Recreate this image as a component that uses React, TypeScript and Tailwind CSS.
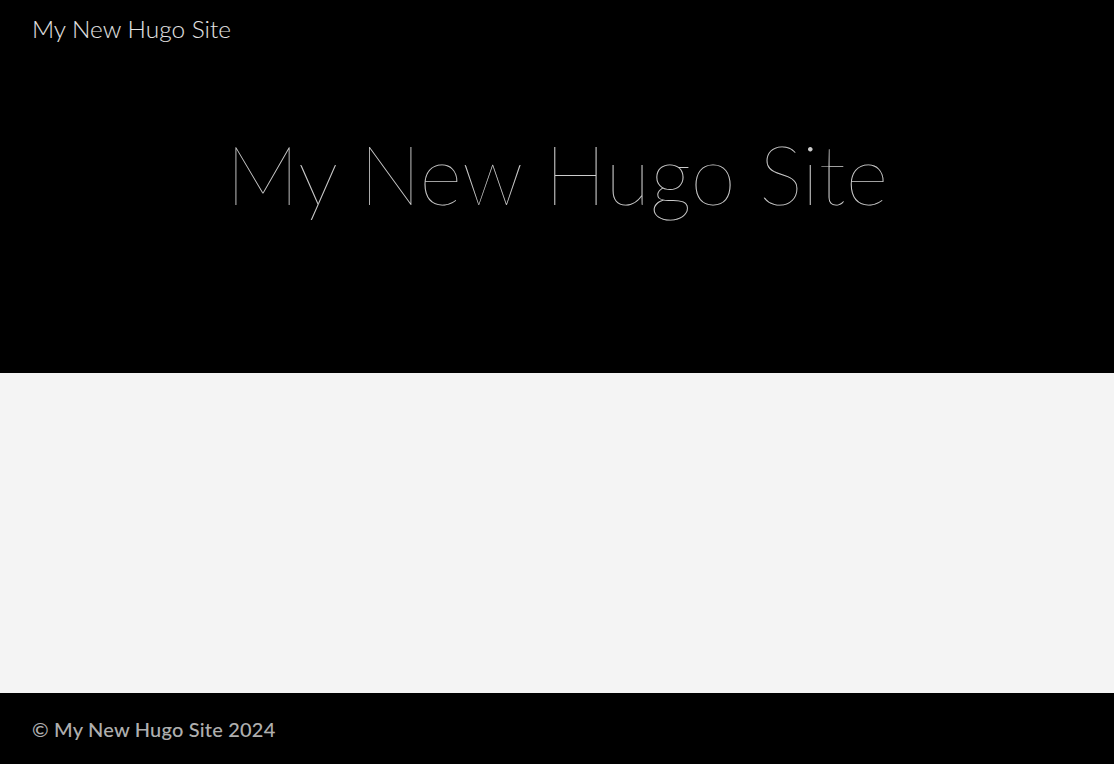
export default function App() {
  return (
    <div className="min-h-screen flex flex-col bg-[#f4f4f4] font-['Lato',sans-serif]">
      <header className="h-[373px] bg-black flex flex-col">
        <nav className="px-8 pt-[14px]">
          <a href="#" className="text-[24.4px] font-light text-white/90 leading-[30px]">
            My New Hugo Site
          </a>
        </nav>
        <div className="pt-[88px] text-center">
          <h1 className="text-[82px] font-extralight text-white/80 leading-none">My New Hugo Site</h1>
        </div>
      </header>
      <main className="h-[320px] bg-[#f4f4f4]" />
      <footer className="h-[71px] bg-black px-8 flex items-center">
        <a href="#" className="text-[20px] font-medium tracking-[0.01em] text-white/70">
          © My New Hugo Site 2024
        </a>
      </footer>
    </div>
  );
}
